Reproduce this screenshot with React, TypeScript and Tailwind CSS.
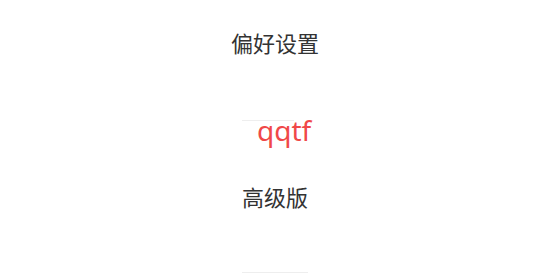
export default function App() {
  return (
    <div
      className="flex h-[275px] w-[550px] flex-col items-center bg-white text-[#333333]"
      style={{ fontFamily: '"Noto Sans", "Noto Sans CJK SC", sans-serif' }}
    >
      <div className="pt-[27px] text-[22px] leading-[32px]">偏好设置</div>
      <div className="mt-[61px] flex w-[66px] flex-col">
        <div className="h-px w-[52px] bg-[#eeeeee]" />
        <div className="-mt-[7px] pl-[15px] text-[28px] leading-[32px] text-[#f04848] whitespace-nowrap">qqtf</div>
        <div className="mt-[35px] text-center text-[22px] leading-[32px] whitespace-nowrap">高级版</div>
        <div className="mt-[59px] h-px w-full bg-[#eeeeee]" />
      </div>
    </div>
  );
}
